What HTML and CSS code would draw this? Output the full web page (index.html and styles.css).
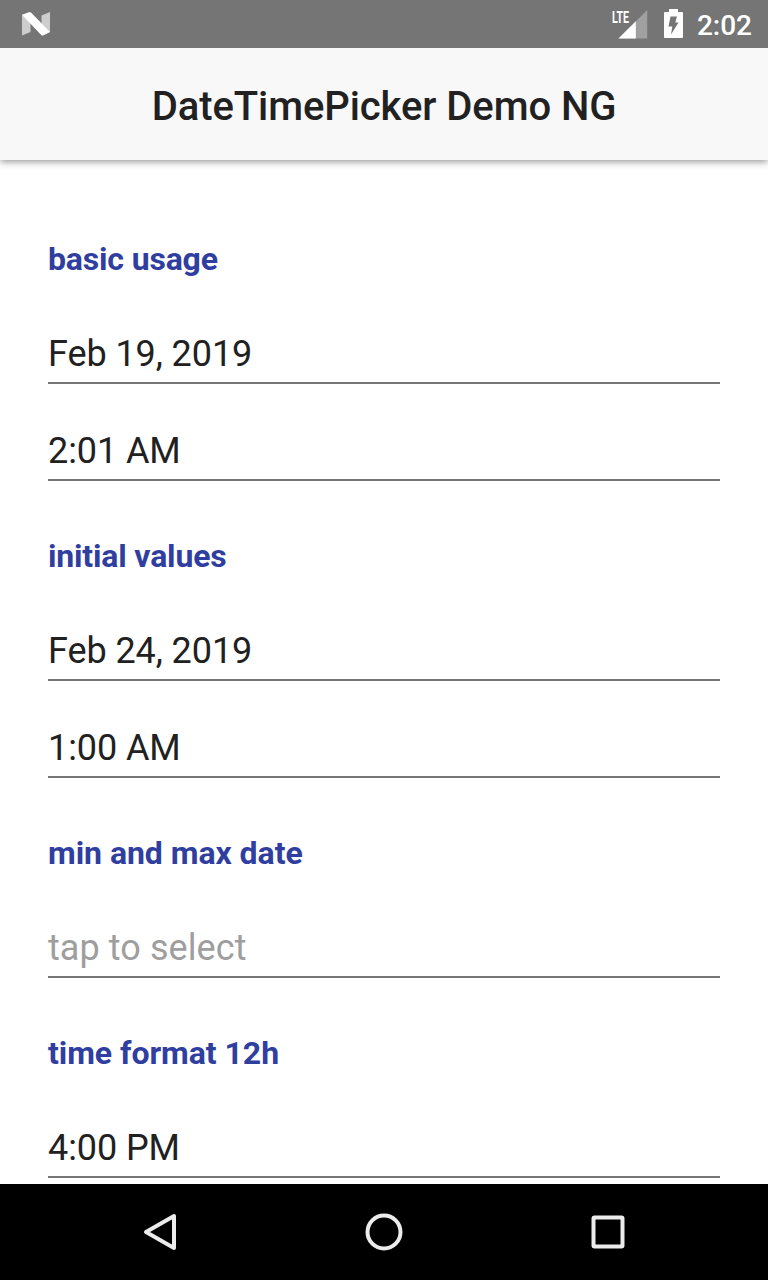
FILE: index.html
```html
<!DOCTYPE html>
<html lang="en">
<head>
<meta charset="utf-8">
<title>DateTimePicker Demo NG</title>
<link rel="stylesheet" href="styles.css">
</head>
<body>
<div class="screen">
  <div class="status-bar">
    <svg class="status-logo" width="28" height="24" viewBox="0 0 28 24">
      <path d="M0 3 8.500 0V20L0 23.500ZM19.500 3.500 28 0V20L19.500 23.500Z" fill="#cdcdcd"/>
      <path d="M0 2.800 7 .3Q8.500 .2 9.500 1L28 20 21.500 23.300Q20 23.800 19 22.800Z" fill="#fff"/>
    </svg>
    <div class="status-icons">
      <div class="signal">
        <span class="signal-label">LTE</span>
        <svg width="36" height="29" viewBox="0 0 36 29">
          <path d="M35.200 0V28.500H6.500Z" fill="#a0a0a0"/>
          <path d="M23.800 11.300V28.500H6.500Z" fill="#fff"/>
        </svg>
      </div>
      <svg class="battery" width="19" height="29" viewBox="0 0 19 29">
        <path d="M5 0H14V3H18Q19 3 19 4V28Q19 29 18 29H1Q0 29 0 28V4Q0 3 1 3H5Z" fill="#fff"/>
        <path d="M6.500 7.500H13L11.300 13.500H14.500L7 25.500 8.300 17.500H4.500Z" fill="#757575"/>
      </svg>
      <span class="clock">2:02</span>
    </div>
  </div>
  <header class="action-bar"><h1 class="title">DateTimePicker Demo NG</h1></header>
  <main class="content">
    <section class="group">
      <h2 class="label">basic usage</h2>
      <div class="fields">
        <div class="field">Feb 19, 2019</div>
        <div class="field">2:01 AM</div>
      </div>
    </section>
    <section class="group">
      <h2 class="label">initial values</h2>
      <div class="fields">
        <div class="field">Feb 24, 2019</div>
        <div class="field">1:00 AM</div>
      </div>
    </section>
    <section class="group">
      <h2 class="label label-wide">min and max date</h2>
      <div class="fields"><div class="field field-empty">tap to select</div></div>
    </section>
    <section class="group">
      <h2 class="label label-wide">time format 12h</h2>
      <div class="fields"><div class="field">4:00 PM</div></div>
    </section>
  </main>
  <nav class="nav-bar">
    <svg width="40" height="40" viewBox="0 0 40 40"><path d="M34 4V36L6 20Z"/></svg>
    <svg width="40" height="40" viewBox="0 0 40 40"><circle cx="20" cy="20" r="16.500"/></svg>
    <svg width="40" height="40" viewBox="0 0 40 40"><rect x="5.500" y="5.500" width="29" height="29" rx="1"/></svg>
  </nav>
</div>
</body>
</html>
```
FILE: styles.css
```css
* {
  box-sizing: border-box;
}

body {
  margin: 0;
  font-family: Roboto, sans-serif;
  color: #212121;
}

.screen {
  display: flex;
  flex-direction: column;
  width: 768px;
  height: 1280px;
  overflow: hidden;
  background: #fff;
}

.status-bar {
  display: flex;
  justify-content: space-between;
  flex: none;
  height: 48px;
  z-index: 2;
  padding: 0 16px 0 22px;
  background: #757575;
  color: #fff;
}

.status-logo {
  margin-top: 12px;
}

.status-icons {
  display: flex;
}

.signal {
  position: relative;
  margin: 10px 16px 0 0;
}

.signal svg,
.battery {
  display: block;
}

.signal-label {
  position: absolute;
  left: 0;
  top: -1px;
  font-size: 17px;
  line-height: 16px;
  font-weight: 700;
  transform: scaleX(0.62);
  transform-origin: left;
}

.battery {
  margin: 9px 14px 0 0;
}

.clock {
  font-size: 28px;
  line-height: 52px;
  font-weight: 500;
}

.action-bar {
  flex: none;
  height: 112px;
  z-index: 1;
  background: #f8f8f8;
  box-shadow: 0 2px 7px rgba(0, 0, 0, 0.4);
}

.title {
  margin: 0;
  font-size: 40px;
  line-height: 118px;
  font-weight: 500;
  letter-spacing: -0.08px;
  text-align: center;
}

.content {
  display: flex;
  flex: 1;
  flex-direction: column;
  gap: 55px;
  min-height: 0;
  padding: 79px 48px 0;
}

.group {
  display: flex;
  flex-direction: column;
  gap: 51px;
}

.label {
  margin: 0;
  font-size: 32px;
  line-height: 40px;
  font-weight: 700;
  letter-spacing: -0.17px;
  color: #303f9f;
}

.label-wide {
  letter-spacing: -0.05px;
}

.fields {
  display: flex;
  flex-direction: column;
  gap: 43px;
}

.field {
  height: 54px;
  border-bottom: 2px solid #757575;
  font-size: 36px;
  line-height: 48px;
  letter-spacing: -0.08px;
}

.field-empty {
  color: #9e9e9e;
  letter-spacing: 0.08px;
}

.nav-bar {
  display: flex;
  align-items: center;
  justify-content: center;
  gap: 184px;
  flex: none;
  height: 96px;
  z-index: 1;
  background: #000;
}

.nav-bar svg {
  fill: none;
  stroke: #ececec;
  stroke-width: 4;
  stroke-linejoin: round;
}
```
